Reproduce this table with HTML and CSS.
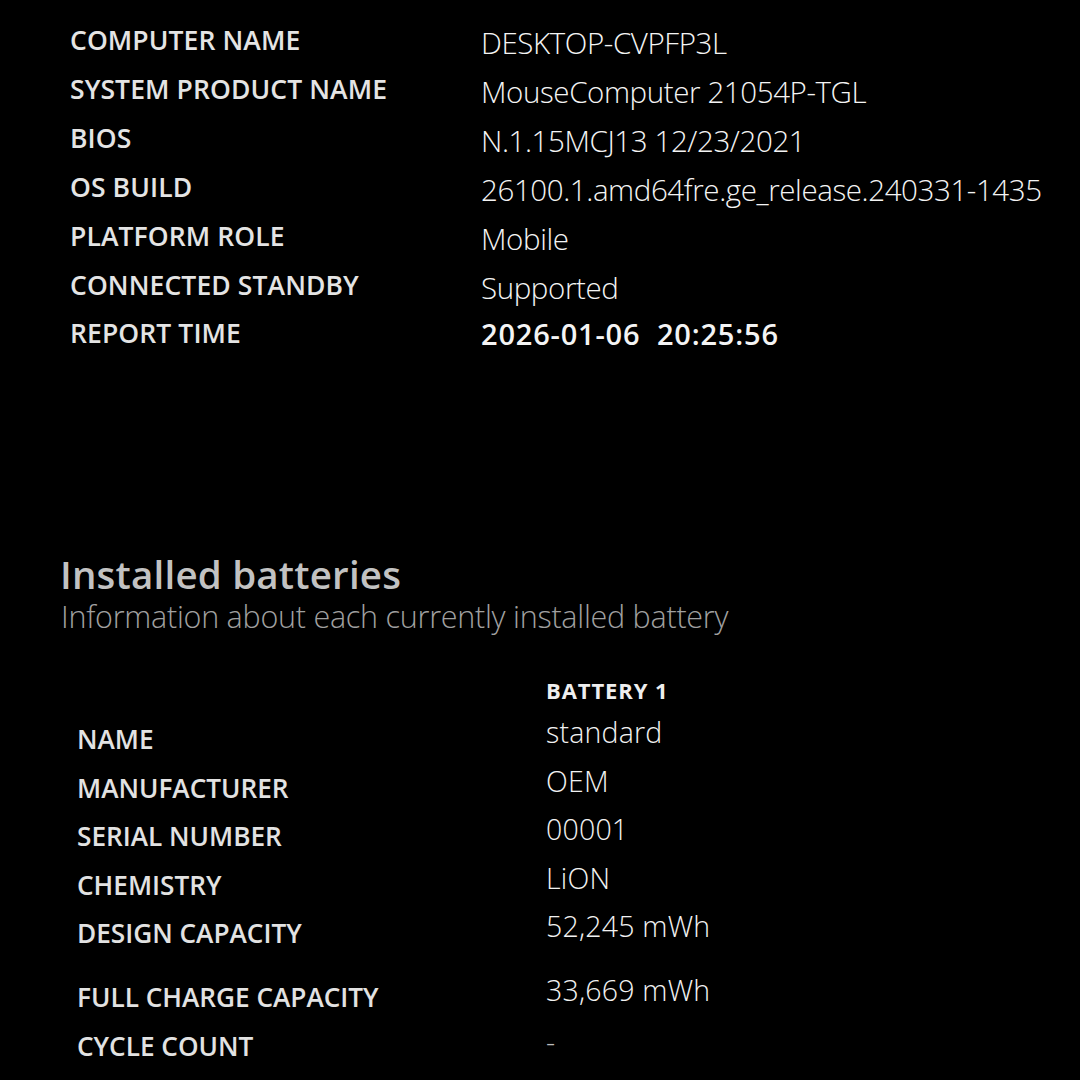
FILE: index.html
```html
<!DOCTYPE html>
<html>
<head>
<meta charset="utf-8">
<link rel="stylesheet" href="styles.css">
</head>
<body>
<section class="sys">
  <div class="row"><div class="lbl">COMPUTER NAME</div><div class="val">DESKTOP-CVPFP3L</div></div>
  <div class="row"><div class="lbl">SYSTEM PRODUCT NAME</div><div class="val">MouseComputer 21054P-TGL</div></div>
  <div class="row"><div class="lbl">BIOS</div><div class="val">N.1.15MCJ13 12/23/2021</div></div>
  <div class="row"><div class="lbl">OS BUILD</div><div class="val">26100.1.amd64fre.ge_release.240331-1435</div></div>
  <div class="row"><div class="lbl">PLATFORM ROLE</div><div class="val">Mobile</div></div>
  <div class="row"><div class="lbl">CONNECTED STANDBY</div><div class="val">Supported</div></div>
  <div class="row"><div class="lbl">REPORT TIME</div><div class="val strong">2026-01-06&nbsp; 20:25:56</div></div>
</section>

<section class="batteries">
  <h2 class="title">Installed batteries</h2>
  <p class="sub">Information about each currently installed battery</p>
  <div class="btable">
    <div class="brow head"><div class="blbl"></div><div class="bhead">BATTERY 1</div></div>
    <div class="brow"><div class="blbl">NAME</div><div class="bval">standard</div></div>
    <div class="brow"><div class="blbl">MANUFACTURER</div><div class="bval">OEM</div></div>
    <div class="brow"><div class="blbl">SERIAL NUMBER</div><div class="bval">00001</div></div>
    <div class="brow"><div class="blbl">CHEMISTRY</div><div class="bval">LiON</div></div>
    <div class="brow tall"><div class="blbl">DESIGN CAPACITY</div><div class="bval">52,245 mWh</div></div>
    <div class="brow"><div class="blbl">FULL CHARGE CAPACITY</div><div class="bval">33,669 mWh</div></div>
    <div class="brow"><div class="blbl">CYCLE COUNT</div><div class="bval dash">-</div></div>
  </div>
</section>
</body>
</html>
```
FILE: styles.css
```css
html, body {
  margin: 0;
  padding: 0;
  background: #000;
}
body {
  width: 1080px;
  height: 1080px;
  overflow: hidden;
  font-family: "Open Sans", "Noto Sans", sans-serif;
  color: #f2f2f2;
}
.sys {
  padding: 18px 0 0 70px;
  display: flex;
  flex-direction: column;
}
.row {
  display: flex;
  align-items: baseline;
  height: 49px;
}
.lbl {
  width: 411px;
  flex: none;
  font-size: 26.5px;
  font-weight: 600;
  color: #e4e4e4;
  letter-spacing: 0.1px;
}
.val {
  font-size: 29.5px;
  font-weight: 300;
  color: #f4f4f4;
  position: relative;
  top: 4px;
  letter-spacing: -0.4px;
}
.val.strong {
  font-weight: 600;
  font-size: 29px;
  letter-spacing: 0.8px;
  top: 2px;
}
.batteries {
  padding: 193px 0 0 60px;
}
.title {
  margin: 0;
  font-size: 38.5px;
  font-weight: 600;
  color: #c2c2c2;
  line-height: 40px;
  letter-spacing: 0.2px;
}
.sub {
  margin: 4px 0 0 1px;
  font-size: 30.5px;
  font-weight: 300;
  color: #a0a0a0;
  line-height: 36px;
  letter-spacing: -0.25px;
}
.btable {
  margin-top: 40px;
  display: flex;
  flex-direction: column;
}
.brow {
  display: flex;
  align-items: baseline;
  height: 48.5px;
}
.brow.head {
  height: 38px;
}
.brow.tall {
  height: 64px;
}
.blbl {
  width: 469px;
  flex: none;
  padding-left: 17px;
  font-size: 26.2px;
  font-weight: 600;
  color: #e2e2e2;
  position: relative;
  top: 7px;
}
.bhead {
  font-size: 22px;
  font-weight: 700;
  color: #eeeeee;
  letter-spacing: 0.9px;
  position: relative;
  top: 1px;
}
.bval {
  font-size: 28.5px;
  font-weight: 300;
  color: #f2f2f2;
  letter-spacing: 0.2px;
  position: relative;
  top: 1px;
}
.bval.dash {
  color: #bbbbbb;
  top: 4px;
}
```
